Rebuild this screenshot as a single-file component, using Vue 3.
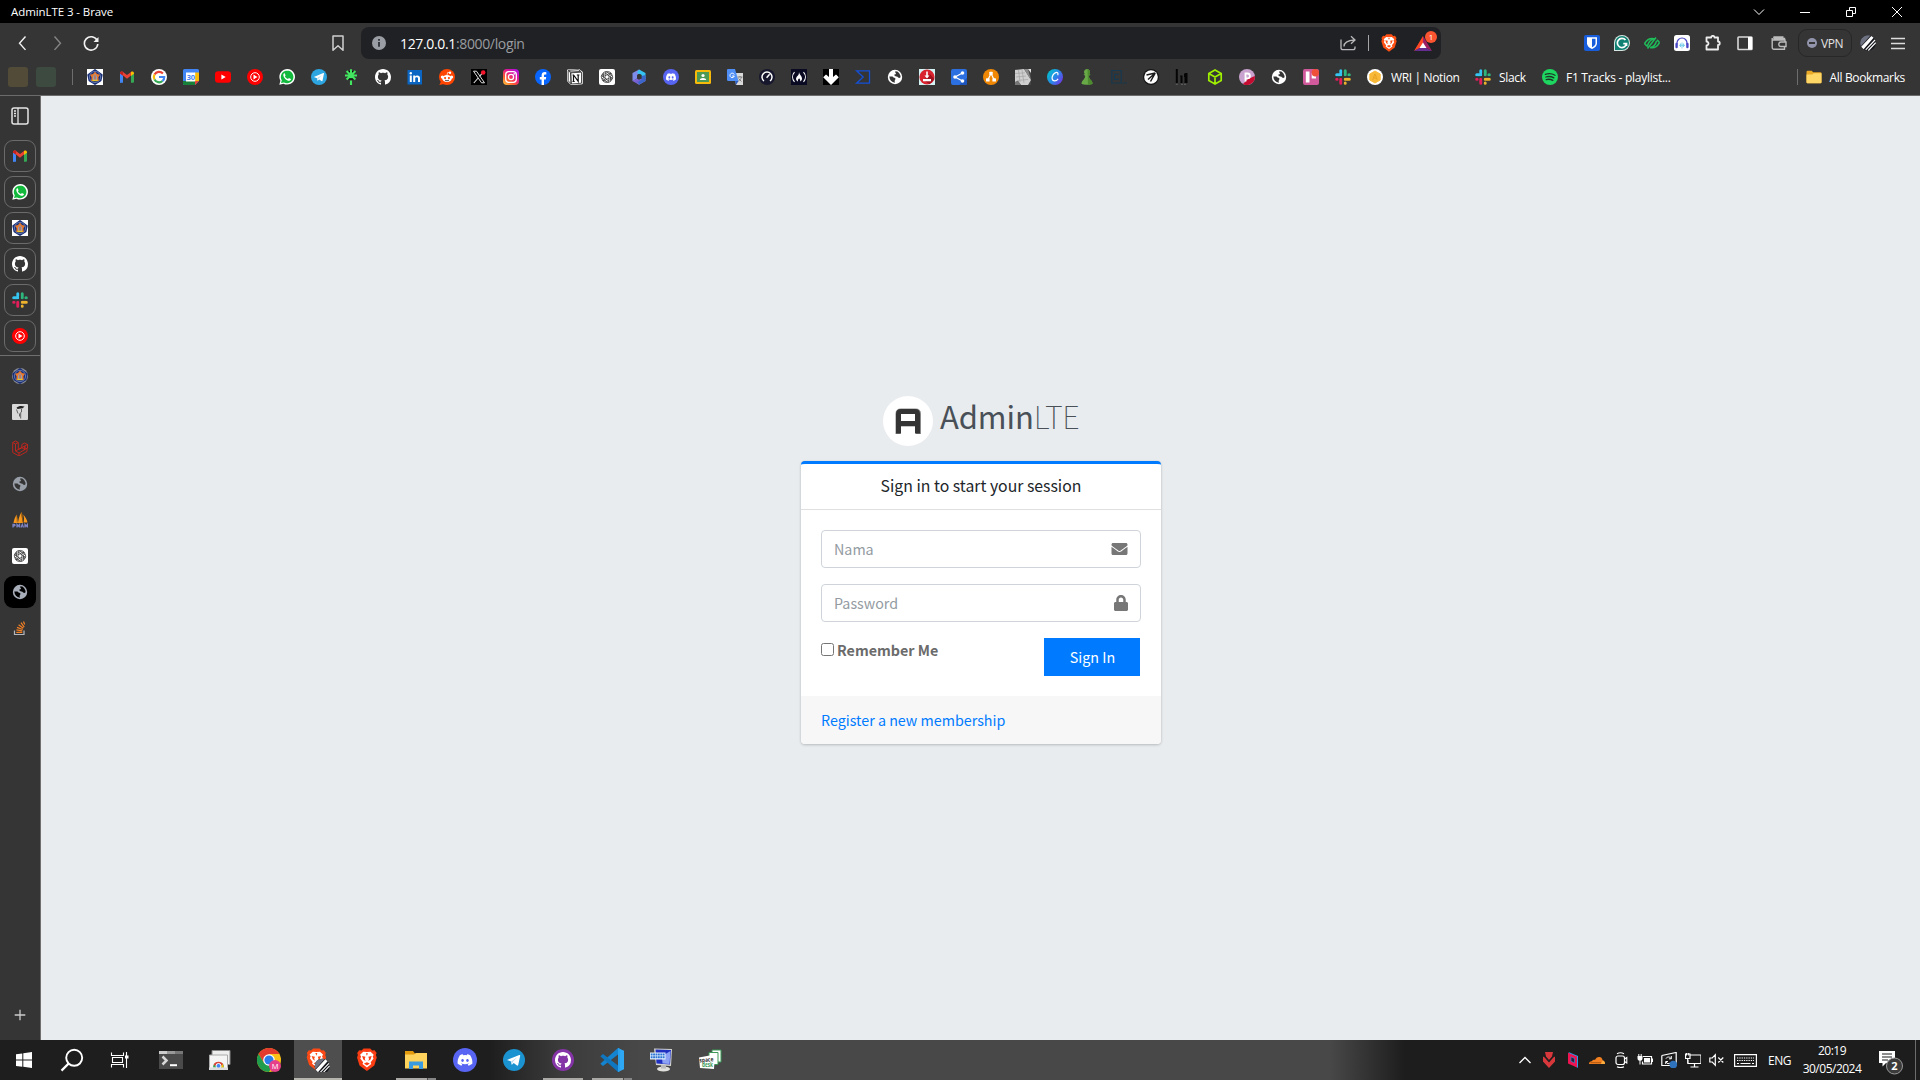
<script setup>
const github = 'M8 0C3.58 0 0 3.58 0 8c0 3.54 2.29 6.53 5.47 7.59.4.07.55-.17.55-.38 0-.19-.01-.82-.01-1.49-2.01.37-2.53-.49-2.69-.94-.09-.23-.48-.94-.82-1.13-.28-.15-.68-.52-.01-.53.63-.01 1.08.58 1.23.82.72 1.21 1.87.87 2.33.66.07-.52.28-.87.51-1.07-1.78-.2-3.64-.89-3.64-3.95 0-.87.31-1.59.82-2.15-.08-.2-.36-1.02.08-2.12 0 0 .67-.21 2.2.82.64-.18 1.32-.27 2-.27.68 0 1.36.09 2 .27 1.53-1.04 2.2-.82 2.2-.82.44 1.1.16 1.92.08 2.12.51.56.82 1.27.82 2.15 0 3.07-1.87 3.75-3.65 3.95.29.25.54.73.54 1.48 0 1.07-.01 1.93-.01 2.2 0 .21.15.46.55.38A8.013 8.013 0 0016 8c0-4.42-3.58-8-8-8z'
const discord = 'M13.545 2.907a13.227 13.227 0 0 0-3.257-1.011.05.05 0 0 0-.052.025c-.141.25-.297.577-.406.833a12.19 12.19 0 0 0-3.658 0 8.258 8.258 0 0 0-.412-.833.051.051 0 0 0-.052-.025c-1.125.194-2.22.534-3.257 1.011a.041.041 0 0 0-.021.018C.356 6.024-.213 9.047.066 12.032c.001.014.01.028.021.037a13.276 13.276 0 0 0 3.995 2.02.05.05 0 0 0 .056-.019c.308-.42.582-.863.818-1.329a.05.05 0 0 0-.028-.07 8.875 8.875 0 0 1-1.248-.595.05.05 0 0 1-.005-.085c.084-.063.168-.129.248-.195a.05.05 0 0 1 .051-.007c2.619 1.196 5.454 1.196 8.041 0a.052.052 0 0 1 .053.007c.08.066.164.132.248.195a.051.051 0 0 1-.004.085 8.254 8.254 0 0 1-1.249.594.05.05 0 0 0-.027.071c.24.465.515.909.817 1.329a.05.05 0 0 0 .056.019 13.235 13.235 0 0 0 4.001-2.02.049.049 0 0 0 .021-.037c.334-3.451-.559-6.449-2.366-9.106a.034.034 0 0 0-.02-.019Zm-8.198 7.307c-.789 0-1.438-.724-1.438-1.612 0-.889.637-1.613 1.438-1.613.807 0 1.45.73 1.438 1.613 0 .888-.637 1.612-1.438 1.612Zm5.316 0c-.788 0-1.438-.724-1.438-1.612 0-.889.637-1.613 1.438-1.613.807 0 1.451.73 1.438 1.613 0 .888-.631 1.612-1.438 1.612Z'

const knot = [0, 60, 120, 180, 240, 300]
  .map((a) => `<path transform="rotate(${a} 8 8)" d="M6 8.9V5.1L9 3.2a2.3 2.3 0 0 1 3.3 1.7M6 5.1a2.4 2.4 0 0 1 3.6-2.3" fill="none" stroke="#222" stroke-width=".75"/>`)
  .join('')

const globe = (fg, bg) =>
  `<circle cx="8" cy="8" r="7.2" fill="${fg}"/><path d="M8.2 2.400q2.600-.4 4.200 2 1.500 2.200 1 4.200-1.400.9-2.500-.3-.3-1-1.800-.8Q7 7.300 7.300 5.600q1.800-.2 1.700-1.400-.9-.4-.8-1.800zM2.300 7.400h3.200q.8 1.400 2.500 1.500 1.200 1-.2 2.300-.4 1.200.2 2.500-5.200-.8-5.700-6.300z" fill="${bg}"/>`

const shield = 'M8 .3 10.300.3 11.700 1.700 13.300 1.500 14.700 3.500 14.200 4.800 14.800 6.500 13.100 12 8 15.800 2.900 12 1.200 6.500 1.800 4.800 1.300 3.500 2.700 1.500 4.300 1.700 5.700.3z'
const lion = (c) =>
  `<path d="${shield}" fill="${c}"/><path d="M8 2.800 5.500 2.600 3.300 4.600 4 6 3.400 7.300 5.400 9.900 5 11.100 8 13.400 11 11.100 10.600 9.900 12.600 7.300 12 6 12.700 4.600 10.500 2.600z" fill="#fff"/><path d="M4.700 5.600 7 6.100 6.500 7.500 7.100 9 5.500 8zM11.300 5.600 9 6.100 9.500 7.500 8.900 9 10.500 8zM6 10.700l2-.9 2 .9-2 1.300zM7.300 3.600h1.400L8 5.400z" fill="${c}"/>`

const stripes = '<circle cx="8" cy="8" r="7.800" fill="#15171c"/><path d="M8 .2A7.800 7.800 0 0 0 .9 11.200L10.500.6A8 8 0 0 0 8 .2z" fill="#6d7180"/><path d="M1.200 11.800 11.300.900l2.300 1.900L3.600 14.300z" fill="#fff"/><path d="M5.700 14.800 15 5M8.300 15.500 15.700 7.700" stroke="#fff" stroke-width="1.100"/>'

const crest = (bg) =>
  `${bg ? '<path d="M0 0h16v16H0z" fill="#fff"/>' : '<circle cx="8" cy="8" r="8" fill="#8b8d95"/>'}<path d="M8 1 14.800 5.900 13.600 11.500 8 15 2.400 11.500 1.200 5.900z" fill="#1b2f75" stroke="#1b2f75" stroke-width="1.800" stroke-linejoin="round"/><circle cx="8" cy="8" r="5.600" fill="none" stroke="#6f86bd" stroke-width=".8"/><path d="M8 2.800 10 5l3 .8-1.600 2.500.3 3.700H4.300l.3-3.700L3 5.800 6 5z" fill="#e8792c"/><path d="M8 5 10 7.500v4H6v-4z" fill="#8fa0b8"/><path d="M5.500 10.700h5v1.500h-5z" fill="#e9c92d"/><path d="M7.400 6.500h1.200v4H7.400z" fill="#d3602c"/>`

const icons = {
  crest: crest(true),
  crestRound: crest(false),
  gmail: '<path d="M1 13.800V4.200l3 2.300v7.300H2A1 1 0 0 1 1 13.800z" fill="#4285f4"/><path d="M12 13.800V6.500l3-2.300v8.600a1 1 0 0 1-1 1z" fill="#34a853"/><path d="M1 4.300c0-1.700 1.800-2.300 3-1.400l4 3 4-3v3.700L8 9.700 4 6.600 1 4.500z" fill="#ea4335"/><path d="M12 2.900c1.200-.9 3-.3 3 1.400v.5l-3 2.200z" fill="#fbbc04"/><path d="M1 4.300C1 3 2.500 2 4 2.900v3.700L1 4.500z" fill="#c5221f"/>',
  google: '<circle cx="8" cy="8" r="8" fill="#fff"/><path d="M11.900 4.500A5.200 5.200 0 0 0 3.500 5.500" stroke="#ea4335" stroke-width="2.200" fill="none"/><path d="M3.500 5.500a5.100 5.100 0 0 0 0 5" stroke="#fbbc05" stroke-width="2.200" fill="none"/><path d="M3.500 10.500a5.200 5.200 0 0 0 8 1.500" stroke="#34a853" stroke-width="2.200" fill="none"/><path d="M8 8h5.200a5 5 0 0 1-1.700 4" stroke="#4285f4" stroke-width="2.200" fill="none"/>',
  calendar: '<path d="M0 1.500A1.500 1.500 0 0 1 1.500 0h13A1.500 1.500 0 0 1 16 1.500V12l-4 4H1.500A1.500 1.500 0 0 1 0 14.500z" fill="#4285f4"/><path d="M12 3.500h4V12h-4z" fill="#fbbc04"/><path d="M0 12h12v4H1.500A1.500 1.500 0 0 1 0 14.500z" fill="#188038"/><path d="M12 12h4l-4 4z" fill="#ea4335"/><path d="M3 3.500h9.200V12.500H3z" fill="#fff"/><text x="7.700" y="10.800" font-size="7.500" font-weight="700" text-anchor="middle" fill="#4285f4">30</text>',
  youtube: '<rect y="2.200" width="16" height="11.600" rx="3" fill="#f00"/><path d="m6.400 5.500 4.300 2.500-4.300 2.500z" fill="#fff"/>',
  ytmusic: '<circle cx="8" cy="8" r="8" fill="#f00"/><circle cx="8" cy="8" r="4.300" fill="none" stroke="#fff" stroke-width="1"/><path d="m6.500 5.600 4 2.400-4 2.400z" fill="#fff"/>',
  whatsapp: '<path d="M.3 15.800 1.400 11.700A7.800 7.800 0 1 1 4.500 14.700z" fill="#fff"/><path d="m2 14.100.8-2.800a6.300 6.300 0 1 1 2.200 2.100z" fill="#12b93c"/><path d="M5.700 4.300c-.5-.2-1.400.5-1.400 1.700 0 2.800 3.600 6 6 5.800 1.200-.2 1.800-1 1.600-1.800l-2-.9-.9 1c-1.500-.5-2.500-1.500-3.100-2.800l.7-.9z" fill="#fff"/>',
  telegram: '<circle cx="8" cy="8" r="8" fill="#2ca5e0"/><path d="M2.800 7.900 12.300 4c.5-.2.8.1.7.6l-1.500 7.200c-.1.500-.5.600-.9.300L8.200 10.400l-1.300 1.200c-.2.200-.5.100-.5-.2l-.3-2.100z" fill="#fff"/><path d="m6.300 9.300 4.600-3.200-3.500 3.700-.5 1.600z" fill="#b5d8ed"/>',
  linktree: '<path d="M8 .3v9M2 6.500h12M3.600 2.100 8 6.500l4.400-4.400M3.600 10.500 8 6.500l4.400 4M8 11.500v4.500" stroke="#43e660" stroke-width="2.100"/>',
  github: `<path d="${github}" fill="#fff"/>`,
  linkedin: '<path d="M.5 1h14.500v14.500H.5z" fill="#0a66c2"/><path d="M2.800 6.500h2v6.500h-2zM6.200 6.500h2v.9c1-1.600 4.800-1.500 4.800 1.600v4h-2V9.600c0-2-2.800-1.800-2.800 0V13h-2z" fill="#fff"/><circle cx="3.800" cy="4.300" r="1.200" fill="#fff"/>',
  reddit: '<circle cx="8" cy="8" r="8" fill="#ff4500"/><path d="M.3 16 2 12.600l3 2.500z" fill="#ff4500"/><ellipse cx="8" cy="9.500" rx="4.800" ry="3.500" fill="#fff"/><circle cx="3.300" cy="8" r="1.500" fill="#fff"/><circle cx="12.700" cy="8" r="1.500" fill="#fff"/><circle cx="11" cy="3.700" r="1.200" fill="#fff"/><path d="m8 6 .7-2.600 2.300.4" stroke="#fff" stroke-width=".7" fill="none"/><circle cx="6.100" cy="9" r="1.100" fill="#ff4500"/><circle cx="9.900" cy="9" r="1.100" fill="#ff4500"/><path d="M6 11.200q2 1.200 4 0" stroke="#222" fill="none" stroke-width=".8"/>',
  x: '<path d="M0 0h16v16H0z"/><path d="M2.500 2.200h3l8 11.600h-3z" fill="none" stroke="#ddd" stroke-width="1"/><path d="m12.500 2.800-4 4.500M7.200 9l-4.400 5" stroke="#ddd" stroke-width="1.100"/><circle cx="12.200" cy="3.500" r="2.300" fill="#f4142b"/>',
  instagram: '<defs><linearGradient id="ig" x1="0" y1="1" x2=".8" y2="0"><stop stop-color="#ffd23f"/><stop offset=".35" stop-color="#ff5b2e"/><stop offset=".65" stop-color="#e6178e"/><stop offset="1" stop-color="#b010e0"/></linearGradient></defs><rect width="16" height="16" rx="4" fill="url(#ig)"/><rect x="2.700" y="2.700" width="10.600" height="10.600" rx="3" fill="none" stroke="#fff" stroke-width="1.300"/><circle cx="8" cy="8" r="2.600" fill="none" stroke="#fff" stroke-width="1.300"/><circle cx="11.200" cy="4.900" r=".8" fill="#fff"/>',
  facebook: '<circle cx="8" cy="8" r="8" fill="#0866ff"/><path d="M6.600 16v-5.500H4.800V8h1.800V6.700c0-2.500 1.200-3.600 3.400-3.600l1.300.1v2.300h-1c-1 0-1.300.4-1.300 1.300V8h2.200l-.4 2.500H9V16z" fill="#fff"/>',
  notion: '<path d="M.6.900 11.500.3l3.700 2.500v12L4 15.600.6 12z" fill="#fff" stroke="#fff" stroke-width="1"/><path d="M3.700 3.800 14.500 3.200v11L4.200 15zM1.200 1.500l2.500 2.300.4 11L1.200 11.800zM1.500 1.300l9.800-.6 2.500 1.700-9.900.6z" fill="#fff" stroke="#222" stroke-width=".8"/><path d="M6.500 6v6.500M5.500 12.500h2.200M9.800 6h2.600M11.200 6v6.300L6.600 6H5.500" stroke="#111" stroke-width="1.200" fill="none"/>',
  chatgpt: `<rect width="16" height="16" rx="2" fill="#fff"/>${knot}`,
  m365: '<defs><linearGradient id="m3" x1="0" y1="0" x2="1" y2="1"><stop stop-color="#9b6be8"/><stop offset=".5" stop-color="#6b5fd0"/><stop offset="1" stop-color="#b99af5"/></linearGradient></defs><path d="M8 .4 1.500 4v8.300L6 9.500V6l5-3z" fill="#7d8cea"/><path d="m8 .4 6.500 3.500v6L10.500 8.500V5.800L6 4z" fill="#35c3f2"/><path d="m1.500 12 5-2.800L8 10l6.500-1v3L8 15.700z" fill="url(#m3)"/><path d="M14.500 6v6L8 15.700l-1-2.500 3.500-2.500V7z" fill="#3a65c9"/><path d="M6 6.300 8.300 5l2.200 1.300v3L8 10.700 6 9.500z" fill="#353535"/>',
  discord: `<circle cx="8" cy="8" r="8" fill="#5865f2"/><path transform="translate(3 3) scale(.625)" d="${discord}" fill="#fff"/>`,
  classroom: '<rect y="1" width="16" height="14" rx="1.500" fill="#f6bb0a"/><path d="M2 3h12v10H2z" fill="#4c9a55"/><circle cx="8" cy="6.500" r="1.600" fill="#fff"/><path d="M4.800 11c0-2.800 6.400-2.800 6.400 0z" fill="#fff"/>',
  translate: '<path d="M7 4h9v12H9z" fill="#dadada"/><path d="M1 0h7l3.500 12H1.500A1.500 1.500 0 0 1 0 10.500V1a1 1 0 0 1 1-1z" fill="#4f8ef5"/><path d="m8 12h3.500L9 16z" fill="#2f5fc0"/><path d="M7.200 5.500A2.200 2.200 0 1 0 7.300 7H5.200" stroke="#fff" stroke-width="1" fill="none"/><path d="M10.500 8h5M13 7v1M14.500 8c-.5 2-2 3.500-3 4M11.500 9.500l3 3" stroke="#777" stroke-width=".9" fill="none"/>',
  speedtest: '<circle cx="8" cy="8" r="8" fill="#17172d"/><path d="M5 12a5 5 0 1 1 6 0" fill="none" stroke="#fff" stroke-width="1.500"/><path d="m7.600 8.700 3-3.500" stroke="#fff" stroke-width="1.500"/>',
  fcc: '<path d="M0 0h16v16H0z" fill="#0a0a23"/><path d="M3.500 3.200C1 6 1 10 3.500 12.800M12.500 3.200c2.500 2.800 2.500 6.800 0 9.600" stroke="#fff" stroke-width="1.100" fill="none"/><path d="M8 3c.5 3 3.200 4.300 3 6.800-.1 1.300-.9 2.200-2 2.700.6-1.300 0-1.900-.9-3.200-.7 1-1.700 2-1 3.200C4 11 5 8.500 6.500 7 7.500 6 8 5 8 3z" fill="#fff"/>',
  arrow: '<path d="M0 0h16v16H0z"/><path d="M6 0h4v8l3-2.500 2.800 2.800L8 16 .2 8.300 3 5.500 6 8z" fill="#fff"/>',
  virustotal: '<path d="M1.500 1.800h13v12.400h-13L8.200 8z" fill="none" stroke="#1350d8" stroke-width="1.300"/>',
  globeWhite: globe('#fff', '#353535'),
  globeGrey: globe('#9aa0a9', '#353535'),
  globeDark: globe('#a8afba', '#000'),
  install: '<path d="M0 0h16v16H0z" fill="#d4f3f5"/><circle cx="8" cy="8" r="7.600" fill="#d9232e"/><path d="m11 5 4.500 5-5 5.300L5 11z" fill="#a3121e"/><path d="M7.200 2.500h1.600v4h1.700L8 9.500 5.500 6.500h1.700zM4 10h8v2.200H4z" fill="#fff"/>',
  share: '<rect width="16" height="16" rx="2" fill="#2b6fe0"/><path d="m8 16 8-7v5.500a1.500 1.500 0 0 1-1.500 1.500z" fill="#1e55bd"/><path d="M11.500 4 4 8l7.500 4" stroke="#fff" stroke-width="1.200" fill="none"/><circle cx="11.500" cy="4" r="1.800" fill="#fff"/><circle cx="4" cy="8" r="1.800" fill="#fff"/><circle cx="11.500" cy="12" r="1.800" fill="#fff"/>',
  draw: '<circle cx="8" cy="8" r="8" fill="#f08705"/><path d="M8 4.500 4.800 11M8 4.500l3.200 6.500" stroke="#fff" stroke-width="1.200"/><rect x="6.300" y="2.700" width="3.400" height="3.300" rx=".6" fill="#fff"/><rect x="3" y="9.300" width="3.600" height="3.200" rx=".6" fill="#fff"/><rect x="9.400" y="9.300" width="3.600" height="3.200" rx=".6" fill="#fff"/>',
  stone: '<path d="M0 0h16v16H0z" fill="#454545"/><path d="m0 1 9-1 7 11-3 5H6L3 12l-3 1z" fill="#cfcfcf"/><path d="M9 0h4l3 11z" fill="#8a8a8a"/><path d="M13 0h3v4z" fill="#e4e4e4"/><path d="M0 4.500l10-.7M1 8l10-1M2 11.500l11-1M3.500 1 5 13M7 1l2 13" stroke="#9c9c9c" stroke-width=".6"/><path d="m0 13 3-1 3 4H0z" fill="#777"/>',
  canva: '<defs><linearGradient id="cv" x1="0" y1=".2" x2="1" y2=".9"><stop stop-color="#00c4cc"/><stop offset=".5" stop-color="#2a86e8"/><stop offset="1" stop-color="#7d2ae8"/></linearGradient></defs><circle cx="8" cy="8" r="8" fill="url(#cv)"/><path d="M10.700 6.300c1-2.100-.4-3.200-1.900-2.700C6.500 4.400 4.600 7.500 5.200 10c.6 2.600 4 2.600 5.900-.2" stroke="#fff" stroke-width="1.200" fill="none"/>',
  pawn: '<path d="M8 0a3 3 0 0 1 2.200 5l1.300.8-1.700 1c.2 2 1 3.300 2.500 4.700.8.800 1.200 2 1.200 3.300-2 1.400-9 1.400-11 0 0-1.300.4-2.500 1.200-3.300C5.200 10.100 6 8.800 6.200 6.800l-1.700-1L5.800 5A3 3 0 0 1 8 0z" fill="#68a847"/><path d="M8.500 0a3 3 0 0 1 1.700 5l1.300.8-1.700 1c.2 2 1 3.300 2.500 4.700.8.800 1.200 2 1.200 3.300-1 .7-3 1-4.500 1z" fill="#4d8a30"/>',
  codecademy: '<path d="M.8 1.500h9.400v12.500H.8zM7.800 5.300H3.500v5h4.300M11.500 14H16" fill="none" stroke="#17394f" stroke-width="1.200"/>',
  aero: '<circle cx="8" cy="8" r="8" fill="#161616"/><circle cx="8" cy="8" r="6.800" fill="#fff"/><path d="M12.300 4 3.500 6M12.300 4 7.500 12.500M12.300 4 5 10.500" stroke="#1b1b1b" stroke-width="1.500" fill="none"/>',
  hashnode: '<path d="M.8 0h2v14h-2zM5 6.500h2.500V14H5.500V8.500zM9 4.500h1V4h2.500v10H9.500V8H9z" fill="#050505"/><path d="M.8 15.300h2M6 15.300h6" stroke="#666" stroke-dasharray="2 1"/>',
  cube: '<path d="M8 1 14.200 4.400v7.200L8 15 1.800 11.600V4.400zM1.800 4.400 8 7.900l6.200-3.500M8 7.900V15" fill="none" stroke="#9fef00" stroke-width="1.700"/>',
  pinia: '<circle cx="8" cy="8" r="8" fill="#c9a2cf"/><path d="M15.800 7A8 8 0 0 1 4 15l5-5z" fill="#c40d31"/><path d="M6.500 12.500v-8h2a2.300 2.300 0 0 1 0 4.800H6.500" stroke="#fff" stroke-width="1.800" fill="none"/>',
  trello: '<rect width="16" height="16" rx="2" fill="#d05a9b"/><path d="M2.800 2.500h3.700V13.500H2.800zM8.700 4h4.300v5.500H8.700z" fill="#fff"/><circle cx="12.300" cy="3.700" r="3.700" fill="#ef5039"/>',
  slack: '<path d="M5.800 1.700v1.800M1.700 5.800h4.100" stroke="#36c5f0" stroke-width="3" stroke-linecap="round"/><path d="M10.200 1.700v4.100M14.300 5.800h-.4" stroke="#2eb67d" stroke-width="3" stroke-linecap="round"/><path d="M14.300 10.200h-4.100M10.200 14.300v-.4" stroke="#ecb22e" stroke-width="3" stroke-linecap="round"/><path d="M5.800 14.300v-4.100M1.700 10.200h.4" stroke="#e01e5a" stroke-width="3" stroke-linecap="round"/><path d="M8 0v16M0 8h16" stroke="#353535" stroke-width="1"/>',
  wri: '<circle cx="8" cy="8" r="8" fill="#fff"/><path d="m8 2 5.200 3v6L8 14l-5.200-3V5z" fill="#f9b938" stroke="#f9b938" stroke-width="1" stroke-linejoin="round"/><path d="m5.700 11 2.300-6 2.300 6M6.800 9h2.400" stroke="#e9a322" fill="none"/>',
  spotify: '<circle cx="8" cy="8" r="8" fill="#1ed760"/><path d="M3.300 5.300c3.200-1 6.800-.7 9.700.9M3.800 8c2.700-.8 5.700-.5 8 .9M4.200 10.600c2.300-.6 4.600-.4 6.600.8" fill="none" stroke="#1c3826" stroke-width="1.300" stroke-linecap="round"/>',
  folder: '<path d="M.5 3a1.200 1.200 0 0 1 1.200-1.200h4l1.500 1.500h7A1.200 1.200 0 0 1 15.500 4.500V13a1.200 1.200 0 0 1-1.200 1.200H1.700A1.200 1.200 0 0 1 .5 13z" fill="#e9a825"/><path d="M.5 5.500h5.700l1.500-1.300h7.800v9A1 1 0 0 1 14.500 14.300h-13a1 1 0 0 1-1-1z" fill="#ffd766"/>',
  portrait: '<rect width="16" height="16" rx="1" fill="#d9d9d9"/><path d="M4.500 5.500 6 9.500M9.500 5v3l-.8.500v6M7.500 9.500v3" stroke="#555" fill="none" stroke-width=".9"/><path d="M4.500 3.700c2-1.900 5-2.200 8-1.200l-1.800 1.700-5.200.8z" fill="#222"/>',
  laravel: '<path d="M.7 2.500 3.500 1l2.800 1.500L3.500 4zM.7 2.500V12.500L7 16l8-4.500V8M3.500 4v7L7 13l6-3.500V6.500M6.300 2.500v7L3.500 11M6.300 9.500 9.800 7.700V4.500L12.700 3l2.800 1.500L12.700 6zM12.700 6v3.500M15.500 4.500V8l-2.800 1.500-2.900-1.800M7 13v3" fill="none" stroke="#c8261d" stroke-width=".9"/>',
  phpmyadmin: '<path d="M1.500 11C2 8 3 5 4.700 2.500l1.500 8.500zM6 11C6.500 7 7.500 3 9.500 0c1 3 2 7 1.500 11zM11.500 10.500c.8-2.500.8-4-.2-8 2.200 2.500 3.800 5.500 4.200 8z" fill="#f8991d"/><path d="M9.500.5c.8 3 1.200 6 .8 10M4.700 3 5.300 10.500" stroke="#8a4d0a" stroke-width=".6"/><path d="M1 15.500v-3h1.500q1.500 1-1 1.700M5 15.500v-3l1.200 1.500 1.300-1.500v3M9 15.500l1.300-3 1.200 3M13 15.500v-3l1.200 1.500 1.200-1.500v3" stroke="#7d83c4" stroke-width="1.300" fill="none"/>',
  stack: '<path d="M2.500 10.500v4h9.500v-4" fill="none" stroke="#b4b8bd" stroke-width="1.200"/><path d="M4.300 12.300h6M4.400 9.900l5.900.9M5 7.400l5.700 2.100M6.600 4.800l4.700 3.500M9 2.600l3.200 4.600M11.500 1.500l1.200 3" stroke="#f48024" stroke-width="1.200"/>',
  bitwarden: '<rect width="16" height="16" rx="2" fill="#175ddc"/><path d="M3 2.200h10v6c0 2.700-2.200 4.500-5 5.800-2.800-1.300-5-3.100-5-5.800z" fill="#fff"/><path d="M8 3.700h3.500v4.500c0 1.700-1.500 3-3.500 4.100z" fill="#175ddc"/>',
  grammarly: '<path d="M8 0a8 8 0 0 1 0 16H0V8a8 8 0 0 1 8-8z" fill="#d7e5e1"/><path d="M8 1a7 7 0 0 1 0 14H1V8a7 7 0 0 1 7-7z" fill="#0f8071"/><path d="M11.500 5A4.600 4.600 0 1 0 12.500 8.700H9.300M12.500 8.700V11" fill="none" stroke="#fff" stroke-width="1.700"/>',
  eye: '<path d="M.5 8.500C3 4.300 7 3 10 3.700M15.500 7.500C13 12 9 13.300 6 12.500M3.500 10.500C5 5.500 8 4 11 3.500M12.500 6c-1 4-3.500 6-6 6.500M3.500 13.500 12 2.500M.5 8.500c1 1.500 2 2.300 3.200 3M15.500 7.500c-.8-1.300-1.700-2-2.700-2.700" fill="none" stroke="#1fbd5a" stroke-width="1.500"/>',
  headphones: '<rect width="16" height="16" rx="2.500" fill="#fff"/><path d="M3 9.500V8a5 5 0 0 1 10 0v1.500" stroke="#4a48c5" stroke-width="1.200" fill="none"/><path d="M2.600 9v3M13.400 9v3" stroke="#4a48c5" stroke-width="2.400" stroke-linecap="round"/><path d="M6.500 8.500V12M8 7.500v6M9.500 8.500V12M5 10.300h6" stroke="#72cbea" stroke-width=".9"/>',
  puzzle: '<path d="M1.500 2.500h4.700a1.500 1.500 0 0 1 3.300 0H13v4a1.700 1.700 0 0 1 0 3.500v4.500H1.500v-4a2 2 0 0 0 0-4z" fill="none" stroke="#ececec" stroke-width="1.800" stroke-linejoin="round"/>',
  panel: '<rect x="1" y="2" width="14" height="12.500" rx=".8" fill="none" stroke="#d8d8d8" stroke-width="1.600"/><path d="M11 2h4v12.500h-4z" fill="#fff"/>',
  wallet: '<path d="M13.500 5V3.500H3A1.800 1.800 0 0 1 3 2h9.500M1.200 3v9.500A1.700 1.700 0 0 0 3 14.200h10.500V11.500M1.500 5H14v2M15 7h-5a2.200 2.200 0 0 0 0 4.500h5z" fill="none" stroke="#bcbcbc" stroke-width="1.400"/>',
  stripes,
  menu: '<path d="M1 3.500h14M1 8.500h14M1 13.500h14" stroke="#ddd" stroke-width="1.300"/>',
  back: '<path d="M10.500 1.500 4.500 8.200l6 6.700" fill="none" stroke="#f2f2f2" stroke-width="1.400"/>',
  forward: '<path d="M5.500 1.500 11.500 8.200l-6 6.700" fill="none" stroke="#858585" stroke-width="1.400"/>',
  reload: '<path d="M14 5.200A6.700 6.700 0 1 0 14.800 9" fill="none" stroke="#f2f2f2" stroke-width="1.600"/><path d="M15.500 2v5h-5z" fill="#f2f2f2"/>',
  bookmark: '<path d="M3 1h10v14.300l-5-4.500-5 4.500z" fill="none" stroke="#cfcfcf" stroke-width="1.500" stroke-linejoin="round"/>',
  info: '<circle cx="8" cy="8" r="7" fill="#9a9da4"/><path d="M8 7v4.700M8 4v1.700" stroke="#27292d" stroke-width="1.700"/>',
  shareOut: '<path d="M1 4.500v8.200a2 2 0 0 0 2 2h10a2 2 0 0 0 2-2v-1.200M4 11.500C4 7.500 7 5.500 14.500 5M11 1.300 15 5l-4 3.800" fill="none" stroke="#b8b8ba" stroke-width="1.300"/>',
  lion: lion('#fb4f14'),
  bat: '<path d="M9 1 0 16l9-4.500z" fill="#ff4724"/><path d="m0 16 9-5 9 5z" fill="#662d91"/><path d="M9 1 18 16l-9-5z" fill="#9e1f63"/><path d="m9 7.500 3.500 5.500h-7z" fill="#fff"/>',
  sidebarToggle: '<rect x="1" y="1" width="16" height="16" rx="2" fill="none" stroke="#e5e5e5" stroke-width="1.500"/><path d="M7 1v16M3 4h2M3 6.500h2M3 9h2" stroke="#e5e5e5" stroke-width="1.300"/>',
  plus: '<path d="M8 2.700v10.600M2.700 8h10.600" stroke="#ccc" stroke-width="1.300"/>',
}

const bookmarks = [
  'crest', 'gmail', 'google', 'calendar', 'youtube', 'ytmusic', 'whatsapp', 'telegram', 'linktree', 'github',
  'linkedin', 'reddit', 'x', 'instagram', 'facebook', 'notion', 'chatgpt', 'm365', 'discord', 'classroom',
  'translate', 'speedtest', 'fcc', 'arrow', 'virustotal', 'globeWhite', 'install', 'share', 'draw', 'stone',
  'canva', 'pawn', 'codecademy', 'aero', 'hashnode', 'cube', 'pinia', 'globeWhite', 'trello', 'slack',
]
const pinned = ['gmail', 'whatsapp', 'crest', 'github', 'slack', 'ytmusic']
const tabs = ['crestRound', 'portrait', 'laravel', 'globeGrey', 'phpmyadmin', 'chatgpt', 'globeDark', 'stack']
const extensions = ['bitwarden', 'grammarly', 'eye', 'headphones', 'puzzle', 'panel', 'wallet']

const start = [
  { name: 'windows', art: '<path d="M4 6.300 10.300 5.400v6.200H4zM11.300 5.200 20 4v7.600h-8.700zM4 12.600h6.300v6.200L4 17.900zM11.300 12.600H20V20l-8.700-1.200z" fill="#fff"/>' },
  { name: 'search', art: '<circle cx="14.200" cy="9.800" r="8" fill="none" stroke="#fff" stroke-width="1.900"/><path d="m8.500 15.600-7 7" stroke="#fff" stroke-width="2.200"/>' },
  { name: 'tasks', art: '<path d="M3.500 4.500v3h12v-3M3.500 19.500v-3h12v3M4.500 9.500h10v5h-10zM18.500 4v16" fill="none" stroke="#fff" stroke-width="1.100"/><path d="M17 7.500h3.500v3H17z" fill="#fff"/>' },
]

const apps = [
  { name: 'terminal', art: '<path d="M0 3h24v18H0z" fill="#4a4a4a"/><path d="M0 3h8v3H0z" fill="#ccc"/><path d="M8 3h8v3H8z" fill="#999"/><path d="M16 3h8v3h-8z" fill="#777"/><path d="m3.500 8.500 4 4-4 4" stroke="#d8d8d8" stroke-width="2.500" fill="none"/><path d="M11 17.200h7" stroke="#fff" stroke-width="2"/>' },
  { name: 'remote', art: '<path d="M4 2.500h18v14H4z" fill="#eee" stroke="#888"/><path d="M1.500 7h18v14h-18z" fill="#f5f5f5" stroke="#aaa"/><path d="M5 19.500a5.500 5.500 0 0 1 11 0z" fill="#34a853"/><path d="M5.500 17a5.500 5.500 0 0 1 10 0l-5 2z" fill="#db4437"/><path d="M16 19.500 14.500 16l-2 3.500z" fill="#fbbc05"/><circle cx="10.500" cy="18" r="2.500" fill="#4285f4" stroke="#fff"/><path d="M1 19.500h19V22H1z" fill="#ddd"/>' },
  { name: 'chrome', art: '<circle cx="12" cy="12" r="12" fill="#fbc116"/><path d="M1.600 6a12 12 0 0 1 20.800 0H12L7 15z" fill="#e33b2e"/><path d="M1.600 6A12 12 0 0 0 12 24l5-9-10 0z" fill="#1f9d4d"/><circle cx="12" cy="12" r="5.800" fill="#fff"/><circle cx="12" cy="12" r="4.600" fill="#2b7de9"/><circle cx="18" cy="18" r="6" fill="#e7408b"/><text x="18" y="20.700" font-size="7.500" text-anchor="middle" fill="#fff">M</text>' },
  { name: 'brave-profile', active: true, art: `<g transform="translate(-1 0) scale(1.420)">${lion('#fb4a16')}</g><g transform="translate(8.500 10.500) scale(.960)">${stripes}</g>` },
  { name: 'brave', art: `<g transform="translate(.3 0) scale(1.450)">${lion('#fb3d13')}</g>` },
  { name: 'explorer', run: 'multi', art: '<path d="M1 3h8l2 2.500h12V20H1z" fill="#e39a0c"/><path d="M1 6.500h9l2-1.500h11v15.500H1z" fill="#ffd35c"/><path d="M5 21v-7.500h14V21h-4v-3.500H9V21z" fill="#3a9be0"/>' },
  { name: 'discord', art: `<circle cx="12" cy="12" r="12" fill="#5865f2"/><path transform="translate(4.600 4.600) scale(.925)" d="${discord}" fill="#fff"/>` },
  { name: 'telegram', art: '<circle cx="12" cy="12" r="11" fill="#1c93d1"/><path d="M5 11.900 17.300 7c.7-.2 1 .1.9.8l-2 9.200c-.2.700-.600.800-1.200.500L11.700 15l-1.600 1.600c-.300.200-.600.100-.6-.300l-.4-2.800z" fill="#fff"/><path d="m9.200 13.500 6-4.200-4.500 4.800-.7 2.200z" fill="#b5d8ed"/>' },
  { name: 'github', run: 'single', art: `<circle cx="12" cy="12" r="11" fill="#8534a8"/><path transform="translate(4 4)" d="${github}" fill="#fff"/>` },
  { name: 'vscode', run: 'multi', art: '<path d="M18 0 24 2.700v18.600L18 24z" fill="#2ea8f5"/><path d="M18 0v6.500L3 18 .3 15.700z" fill="#1484d0"/><path d="M.3 8.200 3 6l15 11.500V24z" fill="#0f77c0"/><path d="m18 0 2 .9v22.200L18 24z" fill="#29a0ec"/>' },
  { name: 'keyboard', art: '<path d="m5 .5 18 .5-1 17-15-1z" fill="#d5d5d0"/><path d="m6.500 1.500 15.500.5-1 14.500-13.500-1z" fill="#1f2fc0"/><path d="m13 8 8.500-5-1 13-7-.5z" fill="#8ea2f4"/><path d="M1 4.500h15.500v7H1z" fill="#e7f3ff"/><path d="M1.700 6.500h14M1.700 9.300h14" stroke="#2f76d4" stroke-width="2" stroke-dasharray="1.900 .5"/><ellipse cx="14.500" cy="21" rx="6.500" ry="2.500" fill="#e0e0dc"/><path d="M12 17h5v3.500h-5z" fill="#bbb"/>' },
  { name: 'spacedesk', art: '<path d="M14 2h9v12h-9z" fill="#fff" stroke="#3c9957"/><path d="M11 4.500h9v12h-9z" fill="#fff" stroke="#3c9957"/><path d="m1 9.500 16-3-1 14.500L2 20z" fill="#fff"/><text x="8.500" y="13.800" font-size="6" font-weight="700" text-anchor="middle" fill="#333" textLength="14" lengthAdjust="spacingAndGlyphs" transform="rotate(-6 9 13)">space</text><text x="9.500" y="19.200" font-size="6.500" font-weight="700" text-anchor="middle" fill="#3c9957" textLength="11" lengthAdjust="spacingAndGlyphs">desk</text>' },
]

const tray = [
  { name: 'chevron', art: '<path d="m2.500 11 5.500-5.500 5.500 5.500" fill="none" stroke="#fff" stroke-width="1.300"/>' },
  { name: 'valorant', art: '<path d="M4 0h8l-1 4.500-3 3.500-3-3.500zM2 4.500 3.700 5.500 8 10.500l4.300-5L14 4.500v5L8 16 2 9.500z" fill="#d8383b"/>' },
  { name: 'parallels', art: '<path d="M3.500 0 13 4v12l-3-2z" fill="#2d9be8"/><path d="M3 .8 12 4.500V15.500L3 11.500z" fill="#ef1352"/><path d="m6 5 3.500 1.500v4.300L6 9.300z" fill="#2b1d38" stroke="#2d8bd0" stroke-width=".7"/>' },
  { name: 'cloudflare', art: '<path d="M0 12c0-2 1.500-3 3-2.700C3.300 8 5 7.500 6 8c1-2.500 3.300-3.700 5.500-2.700 1.500.7 2 2 2 3C15 8.500 16 10 16 12z" fill="#f38020"/><path d="M1.500 10.700h10.500" stroke="#8e420d" stroke-width=".7"/><path d="M13.500 8.600c1.500 0 2.500 1.400 2.500 3.400h-4z" fill="#faae40"/>' },
  { name: 'meet', art: '<rect x="3" y="4" width="8.500" height="8.500" rx="2" fill="none" stroke="#fff" stroke-width="1.200"/><path d="m11.500 7 2.300-1.500v5.500l-2.300-1.500M4 1.700q3.500-2 7 0M4 14.800q3.500 1.700 7 0" fill="none" stroke="#fff" stroke-width="1.100"/>' },
  { name: 'battery', art: '<path d="M6 4.500h8.500v7.500h-9V9.500" fill="none" stroke="#fff" stroke-width="1.200"/><path d="M7 6h6v4.500H7zM15 6.500h1.200V10H15zM.5 4h5v2.200a2.500 2.500 0 0 1-5 0z" fill="#fff"/><path d="M1.800 2v2M4.200 2v2M3 8v4.500" stroke="#fff" stroke-width="1"/>' },
  { name: 'sync', art: '<path d="m.8 3.500 14.400-3V12M.8 3.500v10H9" fill="none" stroke="#fff" stroke-width="1.200"/><path d="M5 6.500c1-2 4-2 5 0M5 10c1 2 3 2 4 1M10.300 4v2.800H8M4.700 12V9.500H7" fill="none" stroke="#fff" stroke-width="1"/><circle cx="12.300" cy="12.500" r="3.800" fill="#2f73bd"/>' },
  { name: 'network', art: '<path d="M5 3h11v8.500H3V8M9.500 11.500V15M5.500 15h8M.5 2h4.500v4.500H.5zM2.700 6.500v5" fill="none" stroke="#fff" stroke-width="1.200"/><path d="M1.500 1v2.500M3.700 1v2.500" stroke="#fff"/>' },
  { name: 'muted', art: '<path d="M.8 6h2.500l3-3.300v10.600L3.300 10H.8zM9.300 5.500l5 5M14.300 5.500l-5 5" fill="none" stroke="#fff" stroke-width="1.200"/>' },
]
</script>

<template>
  <div class="screen">
    <header class="titlebar">
      <span class="window-title">AdminLTE 3 - Brave</span>
      <div class="window-controls">
        <svg viewBox="0 0 12 12"><path d="m1 3.500 5 5 5-5" /></svg>
        <svg viewBox="0 0 12 12"><path d="M1 6.500h10" /></svg>
        <svg viewBox="0 0 12 12"><path d="M1.500 4.500h6v6h-6zM4.500 4.500v-3h6v6h-3" /></svg>
        <svg viewBox="0 0 12 12"><path d="m1 1 10 10M11 1 1 11" /></svg>
      </div>
    </header>

    <nav class="toolbar">
      <div class="nav-buttons">
        <svg v-for="n in ['back', 'forward', 'reload']" :key="n" class="ico" viewBox="0 0 16 16" v-html="icons[n]" />
      </div>
      <svg class="ico save" viewBox="0 0 16 16" v-html="icons.bookmark" />
      <div class="address">
        <svg class="ico" viewBox="0 0 16 16" v-html="icons.info" />
        <span class="url"><b>127.0.0.1</b>:8000/login</span>
        <div class="address-actions">
          <svg class="ico" viewBox="0 0 16 16" v-html="icons.shareOut" />
          <i class="bar" />
          <svg class="shield" viewBox="0 0 16 16" v-html="icons.lion" />
          <span class="rewards">
            <svg viewBox="0 0 18 17" v-html="icons.bat" />
            <em>1</em>
          </span>
        </div>
      </div>
      <div class="extensions">
        <svg v-for="n in extensions" :key="n" class="ico" :class="n" viewBox="0 0 16 16" v-html="icons[n]" />
      </div>
      <button class="vpn"><i />VPN</button>
      <svg class="ico profile" viewBox="0 0 16 16" v-html="icons.stripes" />
      <svg class="ico" viewBox="0 0 16 16" v-html="icons.menu" />
    </nav>

    <div class="bookmarks">
      <i class="group olive" />
      <i class="group green" />
      <i class="bar" />
      <div class="icon-row">
        <svg v-for="(n, i) in bookmarks" :key="i" class="ico" viewBox="0 0 16 16" v-html="icons[n]" />
      </div>
      <span class="named wri"><svg class="ico" viewBox="0 0 16 16" v-html="icons.wri" /><span>WRI | Notion</span></span>
      <span class="named slk"><svg class="ico" viewBox="0 0 16 16" v-html="icons.slack" /><span>Slack</span></span>
      <span class="named spt"><svg class="ico" viewBox="0 0 16 16" v-html="icons.spotify" /><span>F1 Tracks - playlist...</span></span>
      <span class="all">
        <i class="bar" />
        <svg class="ico" viewBox="0 0 16 16" v-html="icons.folder" />
        <span>All Bookmarks</span>
      </span>
    </div>

    <div class="body">
      <aside class="sidebar">
        <svg class="toggle" viewBox="0 0 18 18" v-html="icons.sidebarToggle" />
        <div class="pinned">
          <span v-for="n in pinned" :key="n" class="tab outlined"><svg class="ico" viewBox="0 0 16 16" v-html="icons[n]" /></span>
        </div>
        <div class="tabs">
          <span v-for="n in tabs" :key="n" class="tab" :class="{ current: n === 'globeDark' }"><svg class="ico" viewBox="0 0 16 16" v-html="icons[n]" /></span>
        </div>
        <svg class="ico plus" viewBox="0 0 16 16" v-html="icons.plus" />
      </aside>

      <main class="page">
        <div class="login-box">
          <div class="logo">
            <svg viewBox="0 0 50 50">
              <circle cx="25" cy="25" r="25" fill="#fff" />
              <path d="M15 38V18q0-3 3-3h14.500q3 0 3 3v20M15 28h20.500" fill="none" stroke="#8b8b8b" stroke-width="5" />
              <path d="M15.500 37.500V18q0-2.500 2.500-2.500h14q2.500 0 2.500 2.500v19.500M15 27.500h20" fill="none" stroke="#343434" stroke-width="5" />
            </svg>
            <span class="brand"><b>Admin</b><i>LTE</i></span>
          </div>
          <section class="card">
            <h3>Sign in to start your session</h3>
            <div class="form">
              <div class="field">
                <span>Nama</span>
                <svg width="17" height="16" viewBox="0 0 512 512"><path d="M502.300 190.800c3.900-3.100 9.700-.2 9.700 4.700V400c0 26.500-21.500 48-48 48H48c-26.500 0-48-21.500-48-48V195.600c0-5 5.700-7.800 9.700-4.700 22.400 17.400 52.100 39.500 154.100 113.600 21.100 15.400 56.700 47.800 92.200 47.600 35.700.3 72-32.800 92.300-47.600 102-74.100 131.600-96.300 154-113.700zM256 320c23.200.4 56.600-29.200 73.400-41.400 132.700-96.300 142.800-104.700 173.400-128.700 5.800-4.500 9.200-11.500 9.200-18.900v-19c0-26.500-21.500-48-48-48H48c-26.500 0-48 21.500-48 48v19c0 7.400 3.400 14.300 9.200 18.900 30.600 23.900 40.700 32.400 173.400 128.700 16.800 12.200 50.200 41.800 73.400 41.400z" /></svg>
              </div>
              <div class="field">
                <span>Password</span>
                <svg width="14" height="16" viewBox="0 0 448 512"><path d="M400 224h-24v-72C376 68.200 307.800 0 224 0S72 68.200 72 152v72H48c-26.500 0-48 21.500-48 48v192c0 26.500 21.500 48 48 48h352c26.500 0 48-21.500 48-48V272c0-26.500-21.500-48-48-48zm-104 0H152v-72c0-39.700 32.300-72 72-72s72 32.300 72 72v72z" /></svg>
              </div>
              <div class="actions">
                <label><i class="box" /><span>Remember Me</span></label>
                <button class="submit">Sign In</button>
              </div>
            </div>
            <footer><a>Register a new membership</a></footer>
          </section>
        </div>
      </main>
    </div>

    <div class="taskbar">
      <span v-for="s in start" :key="s.name" class="start"><svg viewBox="0 0 24 24" v-html="s.art" /></span>
      <div class="apps">
        <span v-for="a in apps" :key="a.name" class="app" :class="[a.run, { active: a.active }]"><svg viewBox="0 0 24 24" v-html="a.art" /></span>
      </div>
      <div class="tray">
        <svg v-for="t in tray" :key="t.name" class="ico" viewBox="0 0 16 16" v-html="t.art" />
        <svg class="kbd" viewBox="0 0 23 13">
          <path d="M.6.600h21.800v11.800H.6z" fill="none" stroke="#fff" stroke-width="1.200" />
          <path d="M3 4h17M3 6.500h17" stroke="#fff" stroke-width="1.200" stroke-dasharray="1.300 1" />
          <path d="M3 9.500h2M6.500 9.500h10M18 9.500h2" stroke="#fff" stroke-width="1.200" />
        </svg>
        <span class="lang">ENG</span>
        <div class="clock"><span class="time">20:19</span><span class="date">30/05/2024</span></div>
        <svg class="notif" viewBox="0 0 26 26">
          <path d="M1 2h16v12H8l-3.500 3.500V14H1z" fill="#fff" />
          <path d="M4 5h10M4 8h10M4 11h6" stroke="#1d1d1d" stroke-width="1.200" />
          <circle cx="16.500" cy="17" r="8" fill="#3b3b3b" stroke="#9a9a9a" />
          <text x="16.500" y="21" font-size="11" font-weight="700" text-anchor="middle" fill="#fff">2</text>
        </svg>
        <i class="peek" />
      </div>
    </div>
  </div>
</template>

<style>
body {
  margin: 0;
  overflow: hidden;
}
</style>

<style scoped>
* {
  box-sizing: border-box;
}
.screen {
  width: 1920px;
  height: 1080px;
  display: flex;
  flex-direction: column;
  overflow: hidden;
  background: #353535;
  color: #fff;
  font-family: 'Open Sans', 'Noto Sans', sans-serif;
  font-size: 12px;
}
svg {
  display: block;
  flex: none;
}
.ico {
  width: 16px;
  height: 16px;
}
i,
em {
  font-style: normal;
}
.bar {
  width: 1px;
  height: 16px;
  background: #6d6d6d;
  flex: none;
}

.titlebar {
  height: 23px;
  flex: none;
  background: #000;
  display: flex;
  justify-content: space-between;
  align-items: center;
  padding: 0 17px 0 11px;
}
.window-title {
  font-size: 11.500px;
  letter-spacing: -0.080px;
}
.window-controls {
  display: flex;
  gap: 34px;
}
.window-controls svg {
  width: 12px;
  height: 12px;
  fill: none;
  stroke: #fff;
  stroke-width: 1;
}

.toolbar {
  height: 36px;
  flex: none;
  display: flex;
  align-items: center;
  padding: 4px 14px 0 15px;
}
.nav-buttons {
  display: flex;
  gap: 18px;
}
.save {
  margin-left: 231px;
}
.address {
  width: 1080px;
  height: 32px;
  margin-left: 15px;
  padding: 0 8px 0 10px;
  border-radius: 8px;
  background: #202124;
  display: flex;
  align-items: center;
}
.url {
  margin-left: 13px;
  font-size: 14px;
  letter-spacing: -0.350px;
  color: #9a9da1;
}
.url b {
  font-weight: 400;
  color: #fff;
}
.address-actions {
  margin-left: auto;
  display: flex;
  align-items: center;
}
.address-actions .bar {
  margin: 0 11px 0 12px;
  background: #a5a5a8;
}
.shield {
  width: 18px;
  height: 18px;
}
.rewards {
  position: relative;
  margin-left: 16px;
  padding-right: 1px;
}
.rewards svg {
  width: 18px;
  height: 17px;
}
.rewards em {
  position: absolute;
  left: 11px;
  top: -4px;
  width: 12px;
  height: 12px;
  border-radius: 6px;
  background: #fb5430;
  font-size: 8px;
  line-height: 12px;
  text-align: center;
}
.extensions {
  display: flex;
  gap: 14px;
  margin-left: 143px;
}
.extensions .puzzle {
  margin-left: 1px;
}
.extensions .panel {
  margin-left: 2px;
}
.extensions .wallet {
  margin-left: 4px;
}
.vpn {
  width: 54px;
  height: 28px;
  margin-left: 11px;
  padding: 0;
  border: 1px solid #272727;
  border-radius: 9px;
  background: none;
  color: #e4e4e4;
  font: 12px 'Open Sans', sans-serif;
  letter-spacing: -0.400px;
  display: flex;
  align-items: center;
  justify-content: center;
  gap: 4px;
}
.vpn i {
  width: 10px;
  height: 10px;
  border-radius: 5px;
  background: linear-gradient(#353535, #353535) center / 6px 2px no-repeat #9294ac;
}
.profile {
  margin: 0 14px 0 8px;
}

.bookmarks {
  height: 37px;
  flex: none;
  display: flex;
  align-items: center;
  padding: 0 15px 0 8px;
  border-bottom: 1px solid #6b6b6b;
  font-size: 12px;
  letter-spacing: -0.350px;
  white-space: nowrap;
}
.group {
  width: 20px;
  height: 20px;
  border-radius: 3px;
}
.olive {
  background: #514b38;
}
.green {
  background: #3d4a40;
  margin: 0 16px 0 8px;
}
.icon-row {
  display: flex;
  gap: 16px;
  margin-left: 14px;
}
.named {
  display: flex;
  align-items: center;
  gap: 8px;
}
.wri {
  width: 108px;
  margin-left: 16px;
}
.slk {
  width: 67px;
}
.spt {
  letter-spacing: -0.270px;
}
.all {
  margin-left: auto;
  display: flex;
  align-items: center;
  gap: 8px;
}

.body {
  flex: 1;
  min-height: 0;
  display: flex;
}
.sidebar {
  width: 41px;
  flex: none;
  border-right: 1px solid #6f6f6f;
  display: flex;
  flex-direction: column;
  padding-bottom: 17px;
}
.toggle {
  width: 18px;
  height: 18px;
  margin: 11px 0 15px 11px;
}
.pinned,
.tabs {
  display: flex;
  flex-direction: column;
  align-items: center;
  gap: 4px;
}
.pinned {
  padding-bottom: 3px;
  border-bottom: 1px solid #6f6f6f;
}
.tabs {
  padding-top: 4px;
}
.tab {
  width: 32px;
  height: 32px;
  border-radius: 9px;
  display: flex;
  align-items: center;
  justify-content: center;
}
.outlined {
  border: 1px solid #6b6b6b;
}
.current {
  background: #000;
}
.plus {
  margin: auto auto 0 12px;
}

.page {
  flex: 1;
  background: #e9ecef;
  padding: 300px 0 0 760px;
  font-family: 'Noto Sans CJK SC', 'Open Sans', sans-serif;
}
.login-box {
  width: 360px;
}
.logo {
  height: 50px;
  display: flex;
  margin-left: 82px;
}
.logo svg {
  width: 50px;
  height: 50px;
}
.brand {
  margin-left: 7px;
  font-size: 31px;
  line-height: 40px;
  letter-spacing: -0.100px;
  color: #495057;
  white-space: nowrap;
}
.brand b {
  font-weight: 400;
}
.brand i {
  font-weight: 100;
  letter-spacing: -0.400px;
}
.card {
  margin-top: 15px;
  height: 283px;
  border-top: 3px solid #007bff;
  border-radius: 4px;
  background: #fff;
  box-shadow: 0 0 1px rgba(0, 0, 0, 0.13), 0 1px 3px rgba(0, 0, 0, 0.2);
  overflow: hidden;
  display: flex;
  flex-direction: column;
}
h3 {
  margin: 0;
  height: 46px;
  border-bottom: 1px solid #dfdfdf;
  text-align: center;
  font-size: 15.800px;
  font-weight: 400;
  line-height: 44px;
  color: #212529;
}
.form {
  flex: 1;
  padding: 20px 20px 0;
}
.field {
  height: 38px;
  margin-bottom: 16px;
  padding: 0 12px;
  border: 1px solid #ced4da;
  border-radius: 4px;
  display: flex;
  align-items: center;
  justify-content: space-between;
  font-size: 14.300px;
  color: #939ba2;
}
.field span {
  padding-bottom: 2px;
}
.field svg {
  fill: #777;
}
.actions {
  display: flex;
  justify-content: space-between;
  padding-right: 1px;
}
label {
  display: flex;
  height: 26px;
  align-items: center;
  gap: 3px;
  font-size: 14.300px;
  font-weight: 700;
  color: #6b6b6b;
}
label span {
  padding-bottom: 3px;
}
.box {
  width: 13px;
  height: 13px;
  margin-top: -3px;
  border: 1px solid #767676;
  border-radius: 2.500px;
  background: #fff;
}
.submit {
  width: 96px;
  height: 38px;
  border: 0;
  padding: 0 0 2px 1px;
  background: #007bff;
  color: #fff;
  font: 14.300px 'Noto Sans CJK SC', sans-serif;
}
footer {
  height: 48px;
  padding-left: 20px;
  background: #f7f7f7;
  font-size: 14.300px;
  line-height: 48px;
  color: #007bff;
}

.taskbar {
  height: 40px;
  flex: none;
  display: flex;
  align-items: center;
  background: linear-gradient(90deg, #1e1e1e 490px, #3b3b3b 560px, #484848 640px, #484848 1330px, #1d1d1d 1405px);
}
.start {
  width: 48px;
  display: flex;
  justify-content: center;
}
.start svg,
.app svg {
  width: 24px;
  height: 24px;
}
.apps {
  display: flex;
  gap: 1px;
  margin-left: 3px;
}
.app {
  width: 48px;
  height: 40px;
  padding-top: 8px;
  display: flex;
  justify-content: center;
}
.active {
  background: linear-gradient(#b5b5ae, #b5b5ae) bottom / 100% 2px no-repeat #4e4e4e;
}
.single {
  background: linear-gradient(#aaa9a6, #aaa9a6) bottom / 40px 2px no-repeat;
}
.multi {
  background: linear-gradient(90deg, #aaa9a6 31px, #4a4a4a 31px 32px, #858585 32px) bottom / 40px 2px no-repeat;
}
.tray {
  margin-left: auto;
  display: flex;
  align-items: center;
  gap: 8px;
}
.kbd {
  width: 23px;
  height: 13px;
  margin-left: 1px;
}
.lang {
  width: 23px;
  margin-left: 3px;
  letter-spacing: -0.500px;
}
.clock {
  width: 62px;
  margin-left: 2px;
  display: flex;
  flex-direction: column;
  align-items: center;
  line-height: 18px;
  letter-spacing: -0.500px;
}
.notif {
  width: 26px;
  height: 26px;
  margin: 3px 0 0 7px;
}
.peek {
  width: 1px;
  height: 40px;
  margin: 0 4px 0 3px;
  background: #6c6c6c;
}
</style>
